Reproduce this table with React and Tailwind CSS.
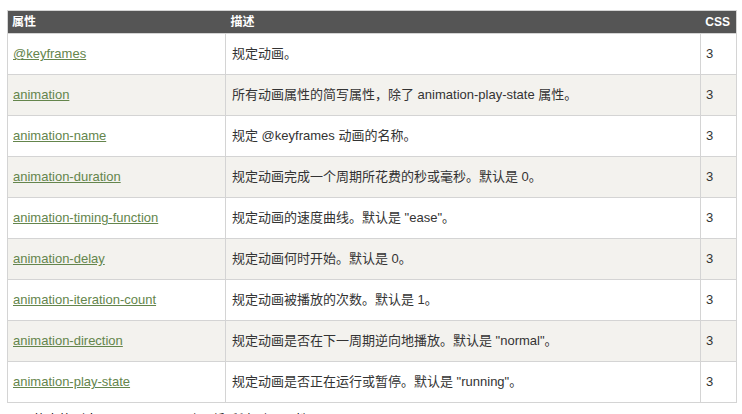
import React from "react";

const rows = [
  ["@keyframes", "规定动画。"],
  ["animation", "所有动画属性的简写属性，除了 animation-play-state 属性。"],
  ["animation-name", "规定 @keyframes 动画的名称。"],
  ["animation-duration", "规定动画完成一个周期所花费的秒或毫秒。默认是 0。"],
  ["animation-timing-function", "规定动画的速度曲线。默认是 \"ease\"。"],
  ["animation-delay", "规定动画何时开始。默认是 0。"],
  ["animation-iteration-count", "规定动画被播放的次数。默认是 1。"],
  ["animation-direction", "规定动画是否在下一周期逆向地播放。默认是 \"normal\"。"],
  ["animation-play-state", "规定动画是否正在运行或暂停。默认是 \"running\"。"],
];

export default function App() {
  return (
    <div
      className="h-[414px] overflow-hidden bg-white pl-[7px] pt-[10px] text-[13px] text-[#333]"
      style={{ fontFamily: '"Liberation Sans", Arial, "Noto Sans CJK SC", sans-serif' }}
    >
      <table className="w-[730px] border-collapse border border-[#d4d4d4]">
        <thead>
          <tr className="h-[23px] bg-[#555555] text-[12px] text-white">
            <th className="w-[218px] px-[4px] text-left font-bold">属性</th>
            <th className="px-[5px] text-left font-bold">描述</th>
            <th className="w-[36px] pr-[6px] text-right font-bold">CSS</th>
          </tr>
        </thead>
        <tbody>
          {rows.map((row, i) => (
            <tr key={row[0]} className={`h-[41px] ${i % 2 ? "bg-[#f3f2ee]" : "bg-white"}`}>
              <td className="border border-[#d4d4d4] px-[5px]">
                <a href="#" className="text-[#64854c] underline">{row[0]}</a>
              </td>
              <td className="border border-[#d4d4d4] px-[6px]">{row[1]}</td>
              <td className="border border-[#d4d4d4] px-[5px]">3</td>
            </tr>
          ))}
        </tbody>
      </table>
      <p className="mt-[7px] text-[13px] text-[#000]">下面的表格列出了 @keyframes 规则和所有动画属性：</p>
    </div>
  );
}
